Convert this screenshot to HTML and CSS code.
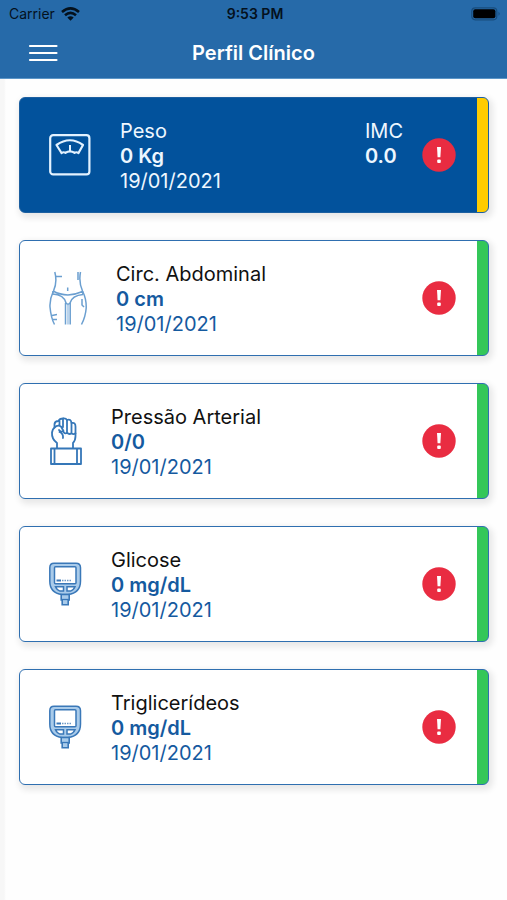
FILE: index.html
```html
<!DOCTYPE html>
<html lang="pt">
<head>
<meta charset="utf-8">
<meta name="viewport" content="width=device-width, initial-scale=1">
<title>Perfil Clínico</title>
<link rel="stylesheet" href="styles.css">
</head>
<body>
<svg class="sprite" aria-hidden="true">
  <symbol id="alert" viewBox="0 0 34 34">
    <circle cx="17" cy="17" r="16.7" fill="#e92c41"/>
    <path d="M15 9h4l-.6 10.200h-2.800z" fill="#fff"/>
    <rect x="15.200" y="21.600" width="3.600" height="3.400" rx="1" fill="#fff"/>
  </symbol>
  <symbol id="meter" viewBox="0 0 33 44">
    <path d="M5 1.200h22q4.500 0 4.500 4.500V19q0 12-12.500 13.500h-6Q.8 31 .8 19V5.700q0-4.500 4.200-4.500z" fill="#a9cbea" stroke="#3a78b8" stroke-width="1.500"/>
    <rect x="5.500" y="4.800" width="21.500" height="17" rx="1" fill="#fff" stroke="#3a78b8" stroke-width="1.500"/>
    <path d="M7.500 18.500h4.500" stroke="#3a78b8" stroke-width="2"/>
    <path d="M13 18.500h9" stroke="#6f9ac6" stroke-width="1.400" stroke-dasharray="1.500 1"/>
    <path d="M6.500 24.800h8v4.300h-3.500q-3-.8-4.500-4.300zM26 24.800h-8v4.300h3.500q3-.8 4.500-4.300z" fill="#fff" stroke="#3a78b8" stroke-width="1.500"/>
    <path d="M12.200 32.500h8V38h-1v4.800h-6V38h-1z" fill="#a9cbea" stroke="#3a78b8" stroke-width="1.600"/>
    <path d="M13 37.500h6.500" stroke="#3a78b8" stroke-width="1.300"/>
  </symbol>
</svg>

<header class="top">
  <div class="status">
    <span class="carrier">Carrier
      <svg width="19" height="14" viewBox="0 0 19 14" aria-hidden="true">
        <g fill="none" stroke="#04111d" stroke-width="2.600"><path d="M1 5Q9.500-2.300 18 5"/><path d="M4 8.300Q9.500 3.500 15 8.300"/></g>
        <path d="M6.300 10.500Q9.500 7.800 12.700 10.500L9.500 13.800z" fill="#04111d"/>
      </svg>
    </span>
    <span class="time">9:53 PM</span>
    <svg class="battery" width="30" height="14" viewBox="0 0 30 14" aria-hidden="true">
      <rect x=".8" y=".8" width="25" height="12" rx="3.500" fill="none" stroke="#184d7d" stroke-width="1.200"/>
      <rect x="2.200" y="2.300" width="22.200" height="9" rx="2" fill="#000"/>
      <path d="M27.500 4.800q2.400 2 0 4z" fill="#184d7d"/>
    </svg>
  </div>
  <div class="bar">
    <button class="menu" type="button" aria-label="Menu">
      <svg width="30" height="18" viewBox="0 0 30 18" aria-hidden="true"><path d="M2 2h26.500M2 9h26.500M2 16h26.500" stroke="#fff" stroke-width="2.200" stroke-linecap="round"/></svg>
    </button>
    <h1>Perfil Clínico</h1>
  </div>
</header>

<main>
  <article class="card active">
    <svg class="icon" width="42" height="42" viewBox="0 0 42 42" fill="none" stroke="#e3f2ff" stroke-width="2.200" stroke-linejoin="round" aria-hidden="true">
      <rect x="1.200" y="1.200" width="39.200" height="39.200" rx="3"/>
      <path d="M7.500 11Q21 1.500 34 11L29.500 19Q27.500 17.600 25.500 18.800Q21 16 16.500 18.800Q14.500 17.600 12.500 19Z"/>
      <path d="M21 11v6.500" stroke-width="2"/>
    </svg>
    <div class="info"><h2>Peso</h2><strong>0 Kg</strong><time datetime="2021-01-19">19/01/2021</time></div>
    <div class="imc"><span>IMC</span><strong>0.0</strong></div>
    <svg class="alert" width="34" height="34" role="img" aria-label="Alerta"><use href="#alert"/></svg>
  </article>

  <article class="card">
    <svg class="icon" width="38" height="54" viewBox="0 0 38 54" fill="none" stroke="#6b9fd0" stroke-width="1.500" aria-hidden="true">
      <path d="M5.800 1Q8.500 11 4.500 20Q.5 28 1 36Q2 47 5.500 53.500M31.500 1Q29.500 11 33.500 20Q37.500 28 37.200 37Q36.500 46 32.500 53.500"/>
      <path d="M29 1v8M6.500 5.500h6.500M3 44.500l5-1M3 48.500h5"/>
      <path d="M4 20Q18 27.500 33.500 20.500M3.500 23Q15 23.500 17 32L19 33.500L21 32Q23 24.500 34 23.500M4 20l-.5 3.500M33.500 20l.5 3.500"/>
      <path d="M16.500 32v21.500M21.200 32v21.500"/>
      <path d="M19 33.500V53.500" stroke="#a5c6e6"/>
      <path d="M18.700 16.500v3.500M33 28v6l2 2"/>
    </svg>
    <div class="info"><h2>Circ. Abdominal</h2><strong>0 cm</strong><time datetime="2021-01-19">19/01/2021</time></div>
    <svg class="alert" width="34" height="34" role="img" aria-label="Alerta"><use href="#alert"/></svg>
  </article>

  <article class="card">
    <svg class="icon" width="33" height="48" viewBox="0 0 33 48" fill="none" stroke="#3577b8" stroke-width="1.800" stroke-linejoin="round" stroke-linecap="round" aria-hidden="true">
      <path d="M2 31.500h30V47H2zM5.500 31.500V47M28 31.500V47"/>
      <path d="M8 31V26Q2.500 22 3 15.500Q3.500 12 5.500 10.500V7Q6 4 9.500 4Q10.500 1.500 14 1.500Q17 1.200 18 3Q22 1.500 22.500 6Q26.500 5 26.500 9.500V19Q26.500 23.500 24 26v5"/>
      <path d="M10.500 4v4M18 3v13M22.500 6v10.500M5.500 10.500Q8.500 7.500 12 9.500L14.500 14Q11.500 15.500 10 13M10.500 15q4 1.500 3.500 6M14.500 15q1.800 2.500 3.500 0.500q2 2.500 4.500.8q2 1.500 4 0M14 1.500V10"/>
    </svg>
    <div class="info"><h2>Pressão Arterial</h2><strong>0/0</strong><time datetime="2021-01-19">19/01/2021</time></div>
    <svg class="alert" width="34" height="34" role="img" aria-label="Alerta"><use href="#alert"/></svg>
  </article>

  <article class="card">
    <svg class="icon" width="33" height="44" aria-hidden="true"><use href="#meter"/></svg>
    <div class="info"><h2>Glicose</h2><strong>0 mg/dL</strong><time datetime="2021-01-19">19/01/2021</time></div>
    <svg class="alert" width="34" height="34" role="img" aria-label="Alerta"><use href="#alert"/></svg>
  </article>

  <article class="card">
    <svg class="icon" width="33" height="44" aria-hidden="true"><use href="#meter"/></svg>
    <div class="info"><h2>Triglicerídeos</h2><strong>0 mg/dL</strong><time datetime="2021-01-19">19/01/2021</time></div>
    <svg class="alert" width="34" height="34" role="img" aria-label="Alerta"><use href="#alert"/></svg>
  </article>
</main>
</body>
</html>
```
FILE: styles.css
```css
* {
  box-sizing: border-box;
}

body {
  margin: 0;
  min-height: 100vh;
  background: linear-gradient(to right, #f7f7f7 4px, #fefefe 6px);
  font-family: Inter, "Liberation Sans", sans-serif;
  color: #111;
}

.sprite {
  display: none;
}

.top {
  background: #266aa9;
  border-bottom: 1px solid #5c96c8;
}

.status {
  display: grid;
  grid-template-columns: 1fr auto 1fr;
  align-items: center;
  height: 27px;
  padding: 0 6px 0 9px;
  font-size: 14px;
  color: #04111d;
}

.carrier {
  display: flex;
  align-items: center;
  gap: 6px;
}

.time {
  font-weight: 600;
}

.battery {
  justify-self: end;
}

.bar {
  display: grid;
  grid-template-columns: 1fr auto 1fr;
  align-items: center;
  height: 51px;
  padding: 0 28px;
}

.menu {
  display: flex;
  justify-self: start;
  padding: 0;
  border: 0;
  background: none;
  cursor: pointer;
}

h1 {
  margin: 0;
  font-size: 20px;
  font-weight: 600;
  color: #fff;
}

main {
  display: grid;
  gap: 27px;
  padding: 18px 18px 27px 19px;
}

.card {
  display: flex;
  align-items: center;
  min-height: 116px;
  padding-left: 29px;
  border: 1px solid #2f6fb0;
  border-radius: 6px;
  background: linear-gradient(to left, #34c759 11px, #fff 11px);
  box-shadow: 2px 3px 6px 2px rgba(0, 0, 0, 0.09);
}

.active {
  background: linear-gradient(to left, #ffcc00 11px, #02529c 11px);
  border-color: #1c5fa0;
}

.icon {
  flex: none;
  margin-right: 29px;
}

.info,
.imc {
  display: grid;
  grid-auto-rows: 25px;
  align-items: center;
  font-size: 20px;
  line-height: 25px;
  color: #155a9f;
}

.info {
  flex: 1;
  padding-top: 2px;
}

.imc {
  align-self: start;
  margin: 21px 19px 0 0;
}

.active .info,
.active .imc,
.active h2 {
  color: #eef7ff;
}

h2 {
  margin: 0;
  font-size: 20px;
  font-weight: 400;
  color: #111;
}

strong {
  font-weight: 600;
}

.alert {
  flex: none;
  margin-right: 32px;
}
```
